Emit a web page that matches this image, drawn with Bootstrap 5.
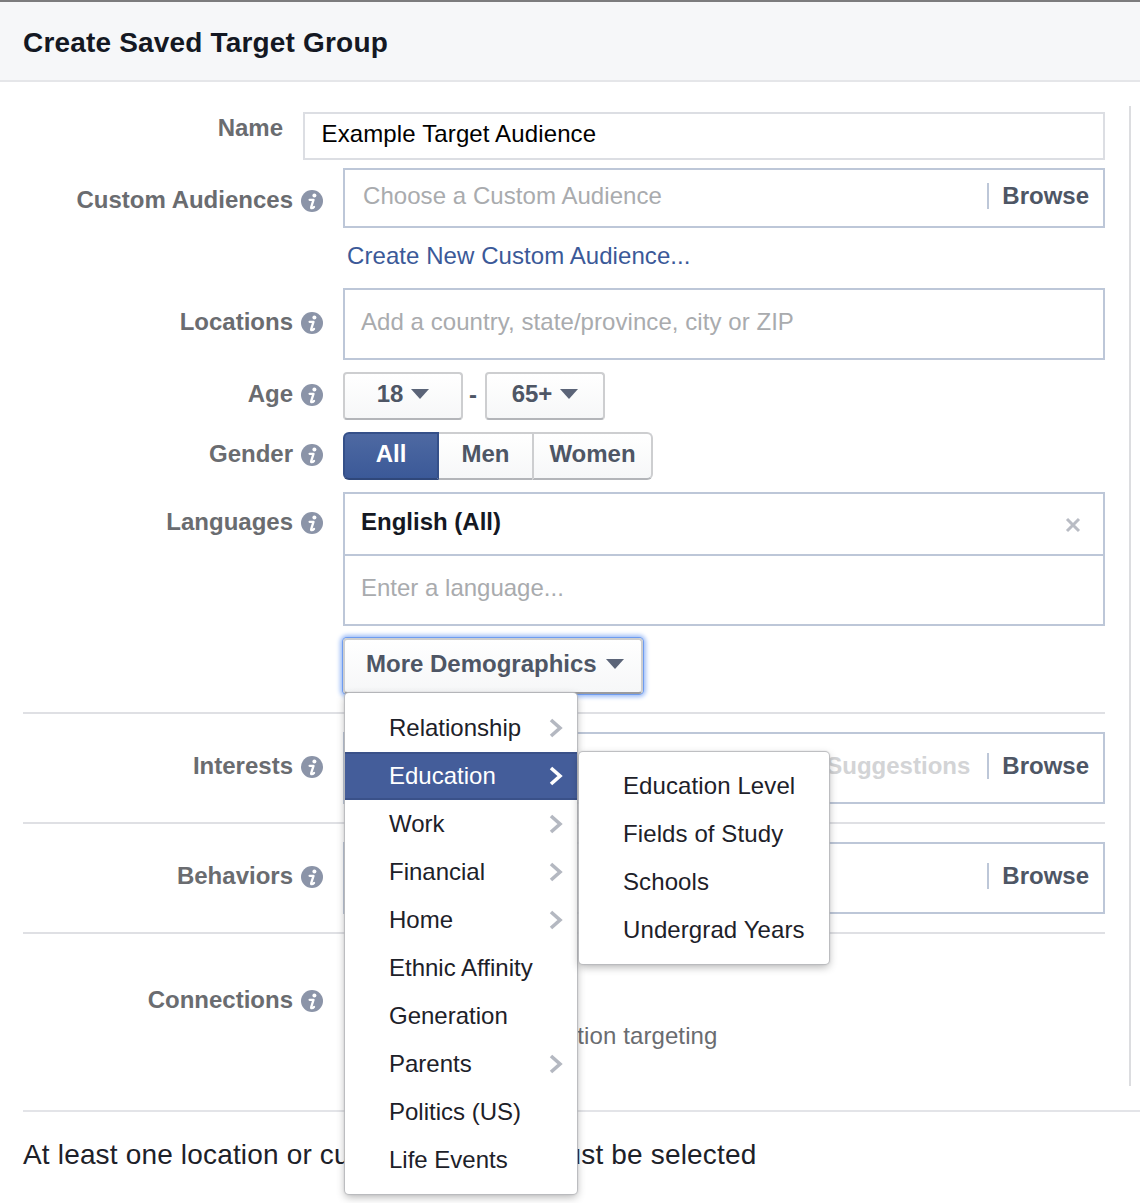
<!DOCTYPE html>
<html lang="en">
<head>
<meta charset="utf-8">
<title>Create Saved Target Group</title>
<link href="https://cdn.jsdelivr.net/npm/bootstrap@5.3.0/dist/css/bootstrap.min.css" rel="stylesheet">
<style>
html,body{margin:0;background:#fff;}
body{width:1140px;height:1203px;overflow:hidden;font-family:"Liberation Sans",Arial,sans-serif;font-size:24px;line-height:28px;color:#1d2129;position:relative;font-variant-ligatures:none;}
.dlg-head{height:82px;background:#f6f7f9;border-top:2px solid #7c7c7e;border-bottom:2px solid #e5e6e9;padding:4px 23px 0;display:flex;align-items:center;}
.dlg-head h1{font-size:28px;font-weight:700;margin:0;line-height:32px;color:#141823;letter-spacing:.18px;}
.dlg-body{position:relative;padding:30px 35px 0 23px;}
.dlg-body::after{content:"";position:absolute;left:1129px;top:24px;height:980px;width:2px;background:#dcdde0;}
.frow{display:flex;}
.flabel{width:300px;flex:none;display:flex;justify-content:flex-end;align-items:center;gap:8px;height:28px;font-weight:700;color:#6a6c70;}
.flabel svg{flex:none;margin-top:2px;}
.ffield{margin-left:20px;width:762px;flex:none;}
.plain-label{width:260px;margin-top:2px;}
.plain-field{width:802px;}
.tbox{border:2px solid #bdc7d8;background:#fff;padding:0 14px 0 18px;display:flex;align-items:center;color:#a9abae;letter-spacing:.06px;}
.tbox-name{border-color:#dcdee3;height:48px;color:#000;padding:0 14px 4px 16.5px;letter-spacing:.13px;}
.h60{height:60px;padding-bottom:4px;}
.h72{height:72px;padding-bottom:4px;padding-left:16px;}
.browse-link{margin-left:auto;border-left:2px solid #bdc7d8;padding-left:13px;line-height:26px;font-weight:700;color:#4e5665;letter-spacing:0;}
.suggest{margin-left:auto;margin-right:17px;font-weight:700;color:#d3d4d6;letter-spacing:0;}
.audience-link{display:block;color:#3b5998;text-decoration:none;margin:14px 0 18px 4px;letter-spacing:.07px;}
.fb-btn{display:inline-flex;align-items:center;justify-content:center;gap:8px;height:48px;padding:0 0 4px;font-size:24px;line-height:28px;font-weight:700;color:#4e5665;background:linear-gradient(#fff,#f6f7f8);border:2px solid #cdced0;border-bottom-color:#b3b5b9;border-radius:4px;}
.age-btn{width:120px;}
.age-dash{width:22px;text-align:center;font-weight:700;color:#4e5665;padding-bottom:2px;padding-right:2px;}
.frow .btn-group>.btn.gender-all,.frow .btn-group>.btn.gender-men,.frow .btn-group>.btn.gender-women{height:48px;font-size:24px;line-height:28px;font-weight:700;padding:0 0 4px;}
.frow .btn-group>.btn.gender-all{width:96px;color:#fff;background:linear-gradient(#4e69a2,#3b5998);border:2px solid #355089;border-bottom-color:#2f477a;}
.frow .btn-group>.btn.gender-men,.frow .btn-group>.btn.gender-women{color:#4e5665;background:linear-gradient(#fff,#f6f7f8);border:2px solid #cdced0;border-bottom-color:#b3b5b9;margin-left:0;}
.frow .btn-group>.btn.gender-men{width:93px;border-left:0;border-right:0;}
.frow .btn-group>.btn.gender-women{width:121px;border-left:2px solid #cdced0;}
.fb-caret{width:0;height:0;border-left:9px solid transparent;border-right:9px solid transparent;border-top:10px solid #5b6478;flex:none;}
.lang-box{border:2px solid #bdc7d8;width:762px;}
.lang-tag{height:62px;padding:0 16px 4px;display:flex;align-items:center;font-weight:700;color:#141823;border-bottom:2px solid #bdc7d8;}
.lang-x{margin-left:auto;margin-right:6px;margin-top:6px;}
.lang-input{height:68px;padding:0 16px 4px;display:flex;align-items:center;color:#a9abae;}
.more-wrap{position:relative;width:302px;margin-top:12px;}
.more-btn{display:flex;justify-content:flex-start;width:300px;height:56px;padding-left:21px;gap:9px;box-shadow:0 0 0 1px #6e9cf0,0 0 4px 3px #9dbdf7;border-bottom-color:#9a9b9f;}
.fb-menu{position:absolute;display:block;left:2px;top:55px;width:232px;height:501px;margin:0;padding:11px 0;border:0;border-radius:4px;background:#fff;box-shadow:0 0 1px 1px #b9babd,0 3px 8px rgba(0,0,0,.3);list-style:none;z-index:10;}
.fb-item{position:relative;display:flex;align-items:center;height:48px;padding:0 13px 0 44px;color:#1d2129;white-space:nowrap;font-weight:400;font-size:24px;line-height:28px;}
.fb-item svg{margin-left:auto;}
.fb-item.is-on{background:#445d9a;color:#fff;border-top:2px solid #3a5189;border-bottom:2px solid #3a5189;}
.fb-sub{left:234px;top:-2px;width:250px;height:212px;padding:10px 0;z-index:11;}
.fb-sub .fb-item{padding:0 0 0 44px;letter-spacing:.1px;}
.fsep{border:0;border-top:2px solid #dfe0e4;opacity:1;margin:0;}
.connect-note{color:#6a6c70;margin:8px 0 0 42px;letter-spacing:.1px;}
.dlg-foot{border-top:2px solid #e3e4e8;padding:27px 0 0 0;margin:60px 0 0 23px;font-size:28px;line-height:32px;color:#1d2129;letter-spacing:.17px;}
</style>
</head>
<body>
<svg width="0" height="0" class="position-absolute">
<defs>
<symbol id="ico-info" viewBox="0 0 22 22"><circle cx="11" cy="11" r="11" fill="#8b94a8"/><circle cx="13.4" cy="5.4" r="2" fill="#fff"/><path d="M8.6 9.8h3.9l-2.3 7.4q-.3 1.1.7 1 1 0 2.1-1.3" fill="none" stroke="#fff" stroke-width="2.3" stroke-linecap="round" stroke-linejoin="round"/></symbol>
<symbol id="ico-chev" viewBox="0 0 16 20"><path d="M3 2l9 8-9 8" fill="none" stroke="#b4b8c1" stroke-width="3.6"/></symbol>
<symbol id="ico-chev-w" viewBox="0 0 16 20"><path d="M3 2l9 8-9 8" fill="none" stroke="#fff" stroke-width="3.6"/></symbol>
</defs>
</svg>
<div class="dlg-head"><h1>Create Saved Target Group</h1></div>
<div class="dlg-body">
  <div class="frow">
    <div class="flabel plain-label">Name</div>
    <div class="ffield plain-field"><div class="tbox tbox-name">Example Target Audience</div></div>
  </div>
  <div class="frow" style="margin-top:8px">
    <div class="flabel" style="margin-top:18px">Custom Audiences <svg width="22" height="22"><use href="#ico-info"/></svg></div>
    <div class="ffield">
      <div class="tbox h60">Choose a Custom Audience<span class="browse-link">Browse</span></div>
      <a class="audience-link" href="#">Create New Custom Audience...</a>
    </div>
  </div>
  <div class="frow">
    <div class="flabel" style="margin-top:20px">Locations <svg width="22" height="22"><use href="#ico-info"/></svg></div>
    <div class="ffield"><div class="tbox h72">Add a country, state/province, city or ZIP</div></div>
  </div>
  <div class="frow" style="margin-top:12px">
    <div class="flabel" style="margin-top:8px">Age <svg width="22" height="22"><use href="#ico-info"/></svg></div>
    <div class="ffield d-flex align-items-center">
      <button type="button" class="fb-btn age-btn">18 <span class="fb-caret"></span></button>
      <span class="age-dash">-</span>
      <button type="button" class="fb-btn age-btn">65+ <span class="fb-caret"></span></button>
    </div>
  </div>
  <div class="frow" style="margin-top:12px">
    <div class="flabel" style="margin-top:8px">Gender <svg width="22" height="22"><use href="#ico-info"/></svg></div>
    <div class="ffield">
      <div class="btn-group" role="group">
        <button type="button" class="btn gender-all">All</button>
        <button type="button" class="btn gender-men">Men</button>
        <button type="button" class="btn gender-women">Women</button>
      </div>
    </div>
  </div>
  <div class="frow" style="margin-top:12px">
    <div class="flabel" style="margin-top:16px">Languages <svg width="22" height="22"><use href="#ico-info"/></svg></div>
    <div class="ffield">
      <div class="lang-box">
        <div class="lang-tag">English (All)
          <svg class="lang-x" width="16" height="16" viewBox="0 0 16 16"><path d="M2 2l12 12M14 2L2 14" stroke="#b9bcc4" stroke-width="3"/></svg>
        </div>
        <div class="lang-input">Enter a language...</div>
      </div>
      <div class="more-wrap">
        <button type="button" class="fb-btn more-btn">More Demographics <span class="fb-caret"></span></button>
        <ul class="dropdown-menu show fb-menu">
          <li class="fb-item">Relationship <svg width="16" height="20"><use href="#ico-chev"/></svg></li>
          <li class="fb-item is-on">Education <svg width="16" height="20"><use href="#ico-chev-w"/></svg>
            <ul class="dropdown-menu show fb-menu fb-sub">
              <li class="fb-item">Education Level</li>
              <li class="fb-item">Fields of Study</li>
              <li class="fb-item">Schools</li>
              <li class="fb-item">Undergrad Years</li>
            </ul>
          </li>
          <li class="fb-item">Work <svg width="16" height="20"><use href="#ico-chev"/></svg></li>
          <li class="fb-item">Financial <svg width="16" height="20"><use href="#ico-chev"/></svg></li>
          <li class="fb-item">Home <svg width="16" height="20"><use href="#ico-chev"/></svg></li>
          <li class="fb-item">Ethnic Affinity</li>
          <li class="fb-item">Generation</li>
          <li class="fb-item">Parents <svg width="16" height="20"><use href="#ico-chev"/></svg></li>
          <li class="fb-item">Politics (US)</li>
          <li class="fb-item">Life Events</li>
        </ul>
      </div>
    </div>
  </div>
  <hr class="fsep" style="margin-top:18px">
  <div class="frow" style="margin-top:18px">
    <div class="flabel" style="margin-top:20px">Interests <svg width="22" height="22"><use href="#ico-info"/></svg></div>
    <div class="ffield"><div class="tbox h72"><span class="suggest">Suggestions</span><span class="browse-link ms-0">Browse</span></div></div>
  </div>
  <hr class="fsep" style="margin-top:18px">
  <div class="frow" style="margin-top:18px">
    <div class="flabel" style="margin-top:20px">Behaviors <svg width="22" height="22"><use href="#ico-info"/></svg></div>
    <div class="ffield"><div class="tbox h72"><span class="browse-link">Browse</span></div></div>
  </div>
  <hr class="fsep" style="margin-top:18px">
  <div class="frow" style="margin-top:52px">
    <div class="flabel">Connections <svg width="22" height="22"><use href="#ico-info"/></svg></div>
    <div class="ffield"><div class="connect-note" style="padding-top:28px">Advanced connection targeting</div></div>
  </div>
</div>
<div class="dlg-foot">At least one location or custom audience must be selected</div>
<script src="https://cdn.jsdelivr.net/npm/bootstrap@5.3.0/dist/js/bootstrap.bundle.min.js"></script>
</body>
</html>
